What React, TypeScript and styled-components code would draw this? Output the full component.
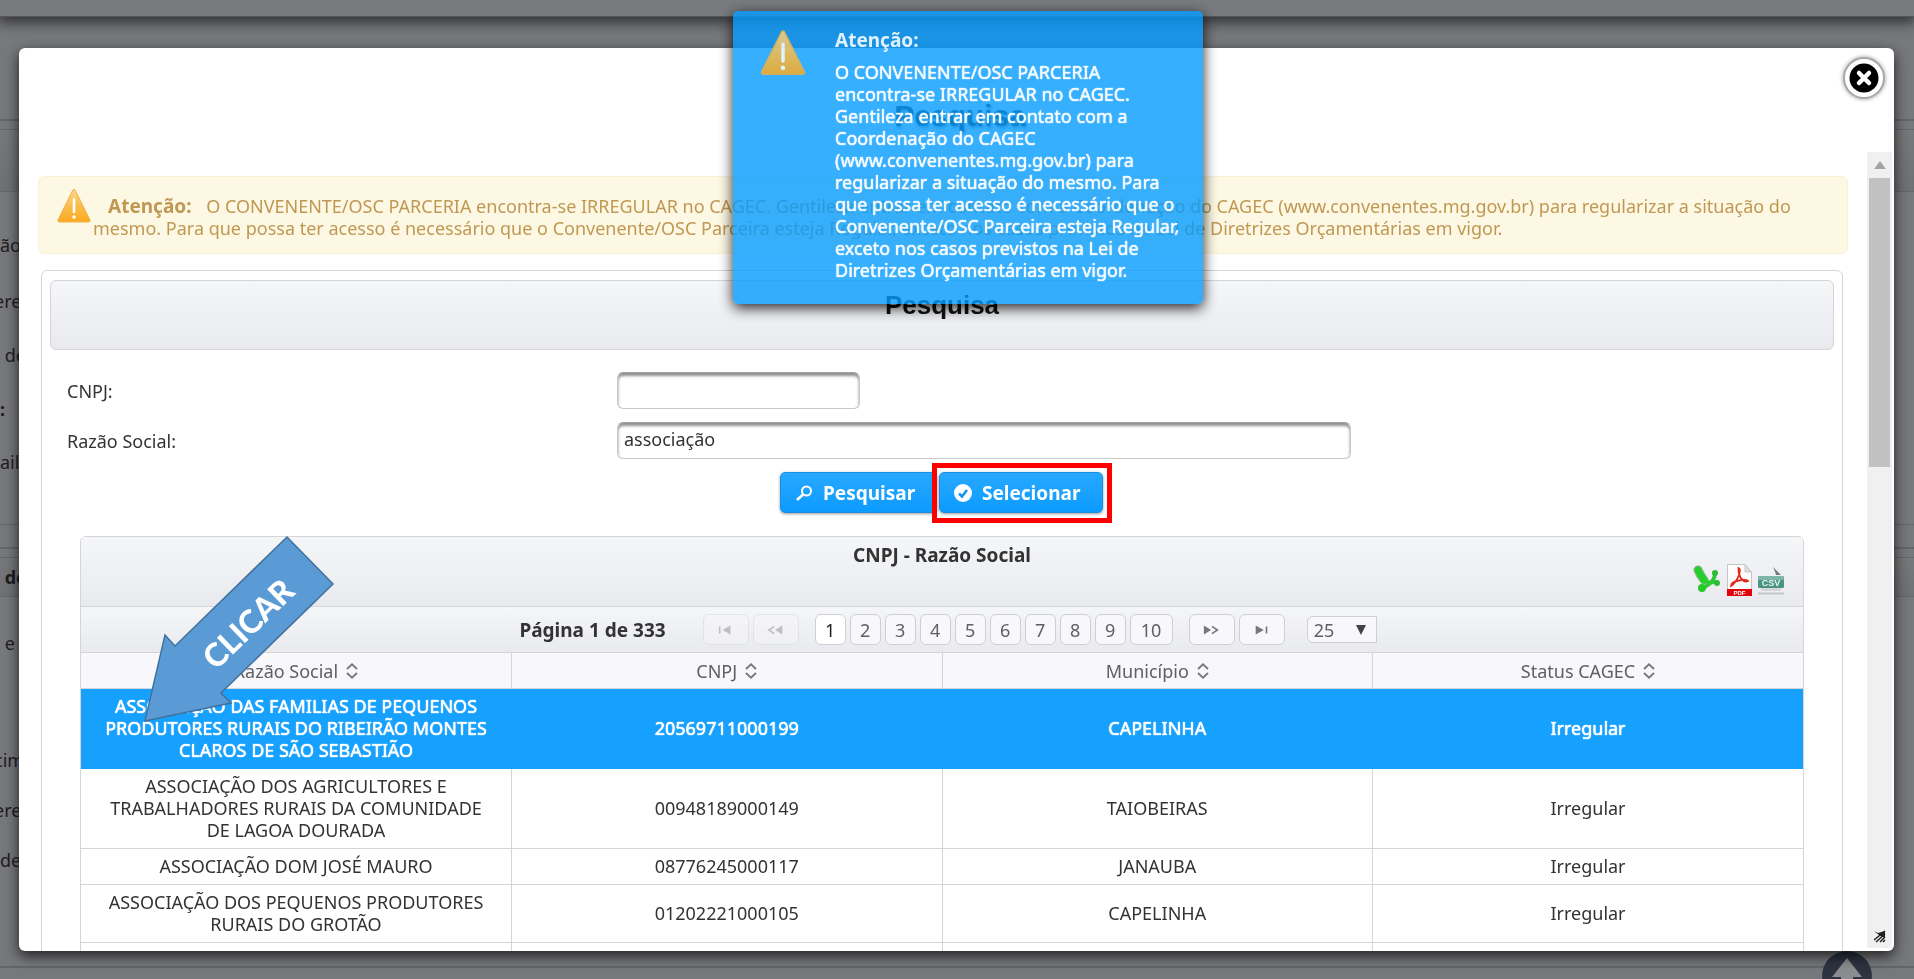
import React from 'react';
import styled, { createGlobalStyle, css } from 'styled-components';

const line = '#d5d5d8';
const blue = '#16a1ff';
const panelGradient = 'linear-gradient(#f5f6f8, #e9eaee)';

const GlobalStyle = createGlobalStyle`
  * { box-sizing: border-box; }
  body {
    margin: 0;
    overflow: hidden;
    background: #77787c;
    color: #333;
    font-family: "Noto Sans", "DejaVu Sans", sans-serif;
    font-size: 18px;
    line-height: 22px;
  }
  button, input, select { font: inherit; }
  h1, h2, p { margin: 0; }
`;

const strong = css`
  text-shadow: 0 0 1px currentColor, 0 0 1px currentColor;
`;
const heading = css`
  font-size: 19px;
  font-weight: bold;
`;

/* dimmed page behind the dialog */
const Page = styled.div`
  height: 100vh;
  overflow: hidden;
  color: #1d1d1f;
`;
const TopBar = styled.header`
  height: 17px;
  background: #797a7e;
  border-bottom: 1px solid #55565a;
  box-shadow: 0 3px 14px 2px #2c2d30;
`;
const Section = styled.section`
  margin-top: ${(p: { $gap: number }) => p.$gap}px;
  border-top: 2px solid #646569;
  padding-top: 8px;
`;
const SectionBar = styled.div`
  height: ${(p: { $h: number }) => p.$h}px;
  border: solid #66676b;
  border-width: 1px 0;
  background: linear-gradient(#77787b, #6e7073);
  font-weight: bold;
  display: flex;
  align-items: center;
`;
const PageLabel = styled.div<{ $h: number; $bold?: boolean; $cut?: boolean }>`
  height: ${(p) => p.$h}px;
  margin-left: ${(p) => (p.$cut ? '-6px' : '0')};
  font-weight: ${(p) => (p.$bold ? 'bold' : 'normal')};
  display: flex;
  align-items: center;
  white-space: pre;
`;
const Divider = styled.div`
  height: 23px;
  margin-top: 37px;
  border-top: 1px solid #646569;
`;
const ToTop = styled.a`
  position: fixed;
  right: 42px;
  bottom: -22px;
  width: 50px;
  height: 50px;
  border-radius: 50%;
  background: #2d3440;
  svg { display: block; }
`;

/* dialog */
const Dialog = styled.div`
  position: fixed;
  inset: 48px 20px 28px 19px;
  display: flex;
  flex-direction: column;
  background: #fff;
  border-radius: 6px;
  box-shadow: 0 5px 14px rgba(0, 0, 0, 0.75);
  overflow: hidden;
`;
const DialogHead = styled.div`
  flex: none;
  height: 104px;
  padding: 50px 0 0 7px;
  text-align: center;
`;
const DialogTitle = styled.h1`
  font: bold 30px/36px "Liberation Sans", sans-serif;
  color: rgba(0, 0, 0, 0.8);
  text-shadow: 1px 2px 3px rgba(0, 0, 0, 0.5);
`;
const CloseButton = styled.button`
  position: absolute;
  top: 9px;
  right: 9px;
  width: 42px;
  height: 42px;
  padding: 0;
  border: 2px solid #a9a9a9;
  border-radius: 50%;
  background: #fff;
  box-shadow: 0 0 4px #999;
  display: grid;
  place-items: center;
`;
const DialogBody = styled.div`
  flex: 1;
  min-height: 0;
  display: flex;
`;
const Content = styled.div`
  flex: 1;
  min-width: 0;
  overflow: hidden;
  padding: 24px 19px 0;
`;
const ScrollTrack = styled.div`
  width: 25px;
  margin: 0 2px 3px 0;
  background: #f0f0f0;
  display: flex;
  flex-direction: column;
  align-items: center;
  justify-content: space-between;
`;
const ScrollUp = styled.div`
  height: 26px;
  display: grid;
  place-items: center;
`;
const ScrollThumb = styled.div`
  width: 21px;
  height: 289px;
  background: #c1c1c1;
  margin-bottom: auto;
`;

const Warning = styled.div`
  display: flex;
  height: 78px;
  padding: 10px 12px 0 18px;
  border: 1px solid #faf0d2;
  border-radius: 6px;
  background: #fcf8e3;
  color: #c09853;
  p { text-indent: 15px; padding-top: 8px; }
  b { ${heading} margin-right: 10px; }
  svg { flex: none; margin-right: 2px; }
`;
const Panel = styled.div`
  margin: 16px 5px 0 3px;
  padding: 9px 8px 0;
  border: 1px solid ${line};
  border-radius: 6px;
`;
const PanelHeader = styled.h2`
  height: 70px;
  padding-top: 8px;
  border: 1px solid ${line};
  border-radius: 6px;
  background: ${panelGradient};
  color: #111;
  text-align: center;
  font: bold 26px/32px "Liberation Sans", sans-serif;
`;
const Form = styled.form`
  padding: 22px 18px 0 17px;
`;
const Field = styled.div`
  display: flex;
  height: 50px;
  label { width: 550px; padding-top: 8px; }
`;
const TextInput = styled.input<{ $w: number }>`
  width: ${(p) => p.$w}px;
  height: 37px;
  padding: 0 6px 3px;
  border: 1px solid #c8c8c8;
  border-top-color: #a0a0a0;
  border-radius: 6px;
  background: #fff;
  box-shadow: inset 0 3px 3px #8f8f8f;
  color: #333;
`;
const Actions = styled.div`
  display: flex;
  justify-content: center;
  gap: 2px;
`;
const Highlight = styled.div`
  position: relative;
  &::after {
    content: "";
    position: absolute;
    inset: -9px -9px -10px -7px;
    border: 5px solid #f00;
    pointer-events: none;
  }
`;
const ActionButton = styled.button<{ $w: number }>`
  width: ${(p) => p.$w}px;
  height: 41px;
  padding: 0 0 0 14px;
  display: flex;
  align-items: center;
  gap: 10px;
  border: 1px solid #1a8fe0;
  border-radius: 5px;
  background: linear-gradient(#28a8ff, #0c9bff);
  box-shadow: 0 1px 3px #999;
  color: #fff;
  ${heading}
`;

const Grid = styled.div`
  margin: 23px 30px 0;
  border: 1px solid ${line};
  border-radius: 6px 6px 0 0;
  overflow: hidden;
`;
const GridHeader = styled.div`
  display: grid;
  height: 70px;
  padding: 7px 19px 10px;
  border-bottom: 1px solid ${line};
  background: ${panelGradient};
  text-align: center;
`;
const GridTitle = styled.div`
  grid-area: 1 / 1;
  color: #333;
  ${heading}
`;
const Exports = styled.div`
  grid-area: 1 / 1;
  justify-self: end;
  align-self: end;
  display: flex;
  align-items: center;
  gap: 6px;
  a { display: block; height: 32px; }
  svg { display: block; }
`;
const Paginator = styled.div`
  display: flex;
  justify-content: center;
  align-items: center;
  height: 45px;
  padding-left: 12px;
  background: ${panelGradient};
`;
const PageInfo = styled.span`
  margin-right: 37px;
  color: #333;
  ${heading}
`;
const PageGroup = styled.div`
  display: flex;
  gap: 4px;
  margin-right: 16px;
`;
const PageButton = styled.button<{ $active?: boolean; $w?: number }>`
  width: ${(p) => p.$w ?? 32}px;
  height: 31px;
  padding: 0;
  display: grid;
  place-items: center;
  border: 1px solid #cfcfd3;
  border-radius: 6px;
  background: ${(p) => (p.$active ? '#fff' : '#f8f7fc')};
  color: ${(p) => (p.$active ? '#222' : '#5f6063')};
  &:disabled { opacity: 0.4; }
`;
const PageSize = styled.div`
  position: relative;
  margin-left: 6px;
  select {
    appearance: none;
    display: block;
    width: 70px;
    height: 27px;
    padding: 0 6px;
    border: 1px solid #cfcfd3;
    border-radius: 6px 0 0 6px;
    background: #f8f7fc;
    color: #5f6063;
    line-height: 24px;
  }
  svg { position: absolute; right: 11px; top: 9px; pointer-events: none; }
`;
const Table = styled.table`
  width: 100%;
  table-layout: fixed;
  border-collapse: collapse;
  text-align: center;
  th {
    height: 36px;
    padding: 0;
    border: 1px solid ${line};
    background: #f8f7fc;
    color: #5f6063;
    font-weight: normal;
  }
  td { padding: 6px 20px 7px; border: 1px solid ${line}; }
  th:first-child, td:first-child { border-left: 0; }
  th:last-child, td:last-child { border-right: 0; }
`;
const Row = styled.tr<{ $selected?: boolean }>`
  ${(p) => p.$selected && css`
    background: ${blue};
    color: #fff;
    ${strong}
    td { border-color: ${blue}; }
  `}
`;
const SortLabel = styled.span`
  display: inline-flex;
  align-items: center;
  gap: 8px;
`;

const Toast = styled.div`
  position: fixed;
  top: 11px;
  left: calc(50% - 224px);
  width: 470px;
  height: 293px;
  padding: 18px 20px 0 27px;
  display: flex;
  gap: 29px;
  border-radius: 5px;
  background: rgba(4, 155, 255, 0.8);
  box-shadow: 0 4px 14px rgba(0, 0, 0, 0.85);
  color: #f2faff;
  ${strong}
  svg { flex: none; opacity: 0.85; }
`;
const ToastTitle = styled.div`
  margin-bottom: 10px;
  color: #dff1ff;
  text-shadow: none;
  ${heading}
`;
const Arrow = styled.svg`
  position: fixed;
  left: 140px;
  top: 530px;
  pointer-events: none;
`;

const WarningIcon = ({ w, h }: { w: number; h: number }) => (
  <svg width={w} height={h} viewBox="0 0 34 36" aria-hidden="true">
    <defs>
      <linearGradient id="amber" x1="0" y1="0" x2="0" y2="1">
        <stop offset="0" stopColor="#fbd88a" />
        <stop offset="0.5" stopColor="#f9bd4c" />
        <stop offset="1" stopColor="#fbab1f" />
      </linearGradient>
    </defs>
    <path d="M17 1.5 Q18 1.5 18.6 3 L33 32 Q33.6 34 31.6 34 H2.4 Q.4 34 1 32 L15.4 3 Q16 1.5 17 1.5Z" fill="url(#amber)" stroke="#eeb04a" />
    <path d="M17 11.500 V24" stroke="#fff" strokeWidth="2.600" strokeLinecap="round" />
    <circle cx="17" cy="29" r="1.700" fill="#fff" />
  </svg>
);
const SortIcon = () => (
  <svg width="12" height="16" viewBox="0 0 12 16" fill="none" stroke="#77787b" strokeWidth="1.800" aria-hidden="true">
    <path d="M1 6 L6 1.300 L11 6 M1 10 L6 14.700 L11 10" />
  </svg>
);
const NavIcon = ({ d, f }: { d: string; f: string }) => (
  <svg width="18" height="10" viewBox="0 0 20 10" aria-hidden="true">
    <path d={d} fill="none" stroke="#77787b" strokeWidth="1.800" />
    <path d={f} fill="#77787b" />
  </svg>
);

const rows = [
  ['ASSOCIAÇÃO DAS FAMILIAS DE PEQUENOS PRODUTORES RURAIS DO RIBEIRÃO MONTES CLAROS DE SÃO SEBASTIÃO', '20569711000199', 'CAPELINHA'],
  ['ASSOCIAÇÃO DOS AGRICULTORES E TRABALHADORES RURAIS DA COMUNIDADE DE LAGOA DOURADA', '00948189000149', 'TAIOBEIRAS'],
  ['ASSOCIAÇÃO DOM JOSÉ MAURO', '08776245000117', 'JANAUBA'],
  ['ASSOCIAÇÃO DOS PEQUENOS PRODUTORES RURAIS DO GROTÃO', '01202221000105', 'CAPELINHA'],
];
const message =
  'O CONVENENTE/OSC PARCERIA encontra-se IRREGULAR no CAGEC. Gentileza entrar em contato com a Coordenação do CAGEC (www.convenentes.mg.gov.br) para regularizar a situação do mesmo. Para que possa ter acesso é necessário que o Convenente/OSC Parceira esteja Regular, exceto nos casos previstos na Lei de Diretrizes Orçamentárias em vigor.';

export default function App() {
  return (
    <>
      <GlobalStyle />
      <Page>
        <TopBar />
        <Section $gap={102}>
          <SectionBar $h={63} />
          <PageLabel $h={25} />
          <PageLabel $h={56}>ão</PageLabel>
          <PageLabel $h={56} $cut>ere</PageLabel>
          <PageLabel $h={52}> de</PageLabel>
          <PageLabel $h={56} $bold>:</PageLabel>
          <PageLabel $h={50}>ail</PageLabel>
        </Section>
        <Divider />
        <Section $gap={0}>
          <SectionBar $h={40}>&nbsp;de</SectionBar>
          <PageLabel $h={92}> e (</PageLabel>
          <PageLabel $h={46} />
          <PageLabel $h={50} $cut>cim</PageLabel>
          <PageLabel $h={50} $cut>ere</PageLabel>
          <PageLabel $h={50}>de</PageLabel>
        </Section>
        <Section $gap={81} />
        <ToTop href="#" aria-label="Topo">
          <svg width="50" height="50" viewBox="0 0 50 50"><path d="M25 7 L40 26 H31 V40 H19 V26 H10Z" fill="#8b8c90" /></svg>
        </ToTop>
      </Page>

      <Dialog role="dialog" aria-label="Pesquisa">
        <DialogHead>
          <DialogTitle>Pesquisa</DialogTitle>
          <CloseButton aria-label="Fechar">
            <svg width="30" height="30" viewBox="0 0 30 30">
              <circle cx="15" cy="15" r="14.500" fill="#000" />
              <path d="M10 10 L20 20 M20 10 L10 20" stroke="#fff" strokeWidth="4.500" strokeLinecap="round" />
            </svg>
          </CloseButton>
        </DialogHead>
        <DialogBody>
          <Content>
            <Warning>
              <WarningIcon w={34} h={38} />
              <p><b>Atenção:</b> {message}</p>
            </Warning>
            <Panel>
              <PanelHeader>Pesquisa</PanelHeader>
              <Form onSubmit={(e) => e.preventDefault()}>
                <Field>
                  <label htmlFor="cnpj">CNPJ:</label>
                  <TextInput id="cnpj" $w={243} />
                </Field>
                <Field>
                  <label htmlFor="razao">Razão Social:</label>
                  <TextInput id="razao" $w={734} defaultValue="associação" />
                </Field>
                <Actions>
                  <ActionButton $w={157}>
                    <svg width="18" height="18" viewBox="0 0 18 18" fill="none" stroke="#fff" strokeWidth="2">
                      <circle cx="11.500" cy="7" r="4.500" /><path d="M8 10.500 L2 16" strokeWidth="2.600" />
                    </svg>
                    Pesquisar
                  </ActionButton>
                  <Highlight>
                    <ActionButton $w={164}>
                      <svg width="18" height="20" viewBox="0 0 18 20">
                        <circle cx="9" cy="10" r="9" fill="#fff" />
                        <path d="M5 10.500 L8 13.500 L13 7" fill="none" stroke="#1297f3" strokeWidth="2.600" />
                      </svg>
                      Selecionar
                    </ActionButton>
                  </Highlight>
                </Actions>
              </Form>
              <Grid>
                <GridHeader>
                  <GridTitle>CNPJ - Razão Social</GridTitle>
                  <Exports>
                    <a href="#" aria-label="Exportar XLS">
                      <svg width="28" height="32" viewBox="0 0 28 32">
                        <g stroke="#8fb58f" fill="none" strokeLinecap="round"><path d="M5 6 Q7 11 11 16" strokeWidth="9" /><path d="M10 17 Q15 19 23 18 M22 9 Q22 19 9 24" strokeWidth="4" /></g>
                        <g stroke="#25cf2b" fill="none" strokeLinecap="round"><path d="M5 6 Q7 11 11 16" strokeWidth="7" /><path d="M10 17 Q15 19 23 18 M22 9 Q22 19 9 24" strokeWidth="3" /></g>
                        <circle cx="22" cy="9" r="3" fill="#2bbd34" /><circle cx="24" cy="19" r="3" fill="#2bbd34" /><circle cx="9" cy="24" r="4" fill="#25c92d" />
                      </svg>
                    </a>
                    <a href="#" aria-label="Exportar PDF">
                      <svg width="25" height="32" viewBox="0 0 25 32">
                        <path d="M.5 .5 H18 L24.500 8 V31.500 H.5Z" fill="#fdfdfd" stroke="#c5c5c5" />
                        <path d="M18 .5 V8 H24.500Z" fill="#ddd" stroke="#c5c5c5" />
                        <path d="M11.500 4 Q14 5 12 11 Q9 19 4 22 Q4 18 12 16.500 Q19 15 21 17 Q17 19 13.500 13.500 Q11 9 11.500 4Z" fill="none" stroke="#e5281b" strokeWidth="1.800" />
                        <path d="M0 25 H25 V32 H0Z" fill="#e3000b" />
                        <text x="12.500" y="31" fontSize="6" fontWeight="bold" textAnchor="middle" fill="#fff" fontFamily="Liberation Sans">PDF</text>
                      </svg>
                    </a>
                    <a href="#" aria-label="Exportar CSV">
                      <svg width="26" height="32" viewBox="0 0 26 32">
                        <path d="M3 3 H17 L23 9 V28 H3Z" fill="#eff0f1" />
                        <path d="M15 3 L23 11 H18 Q17 7 15 3Z" fill="#777" />
                        <path d="M0 29.500 H26" stroke="#c4c6c8" strokeWidth="2" />
                        <path d="M3 25.500 H23" stroke="#d3d5d6" strokeWidth="3" />
                        <rect y="12" width="26" height="12" rx="1.500" fill="#4b9482" />
                        <rect y="12" width="26" height="4" rx="1.500" fill="#7fb5a8" />
                        <text x="13" y="21.500" fontSize="9" fontWeight="bold" textAnchor="middle" fill="#e4f3ef" fontFamily="Liberation Sans">CSV</text>
                      </svg>
                    </a>
                  </Exports>
                </GridHeader>
                <Paginator>
                  <PageInfo>Página 1 de 333</PageInfo>
                  <PageGroup>
                    <PageButton $w={46} disabled aria-label="Primeira"><NavIcon d="M3 1 V9" f="M15 0 V10 L6 5Z" /></PageButton>
                    <PageButton $w={46} disabled aria-label="Anterior"><NavIcon d="M8 1 L2 5 L8 9" f="M17 0 V10 L9 5Z" /></PageButton>
                  </PageGroup>
                  <PageGroup>
                    {[1, 2, 3, 4, 5, 6, 7, 8, 9].map((n) => (
                      <PageButton key={n} $w={31} $active={n === 1}>{n}</PageButton>
                    ))}
                    <PageButton $w={43}>10</PageButton>
                  </PageGroup>
                  <PageGroup>
                    <PageButton $w={46} aria-label="Próxima"><NavIcon d="M10 1 L16 5 L10 9" f="M1 0 V10 L9 5Z" /></PageButton>
                    <PageButton $w={46} aria-label="Última"><NavIcon d="M15 1 V9" f="M3 0 V10 L12 5Z" /></PageButton>
                  </PageGroup>
                  <PageSize>
                    <select aria-label="Linhas por página" defaultValue="25"><option>25</option></select>
                    <svg width="10" height="10" viewBox="0 0 10 10"><path d="M0 0 H10 L5 10Z" fill="#444" /></svg>
                  </PageSize>
                </Paginator>
                <Table>
                  <thead>
                    <tr>
                      {['Razão Social', 'CNPJ', 'Município', 'Status CAGEC'].map((h) => (
                        <th key={h}><SortLabel>{h}<SortIcon /></SortLabel></th>
                      ))}
                    </tr>
                  </thead>
                  <tbody>
                    {rows.map((r, i) => (
                      <Row key={r[1]} $selected={i === 0}>
                        <td>{r[0]}</td><td>{r[1]}</td><td>{r[2]}</td><td>Irregular</td>
                      </Row>
                    ))}
                    <Row><td>&nbsp;</td><td /><td /><td /></Row>
                  </tbody>
                </Table>
              </Grid>
            </Panel>
          </Content>
          <ScrollTrack>
            <ScrollUp><svg width="12" height="8" viewBox="0 0 12 8"><path d="M6 0 L12 8 H0Z" fill="#a3a3a3" /></svg></ScrollUp>
            <ScrollThumb />
            <svg width="14" height="18" viewBox="0 0 14 18">
              <path d="M1 1 L5 3 L12 1 V7 L9 7 L6 5 Z" fill="#222" />
              <path d="M12 1 L1 10 M12 4 L3 12 M12 7 L7 12 M12 10 L10 12" fill="none" stroke="#222" strokeWidth="1.500" />
            </svg>
          </ScrollTrack>
        </DialogBody>
      </Dialog>

      <Arrow width="200" height="200" viewBox="140 530 200 200">
        <path d="M287 537 L333 584 L221 693 L231 703 L145 721 L165 635 L175 646Z" fill="#5b9bd5" stroke="#41719c" strokeWidth="1.500" />
        <text transform="translate(216 671) rotate(-44)" fontFamily="Lato" fontWeight="900" fontSize="32" fill="#fff">CLICAR</text>
      </Arrow>

      <Toast role="alert">
        <WarningIcon w={46} h={48} />
        <div>
          <ToastTitle>Atenção:</ToastTitle>
          <p>{message}</p>
        </div>
      </Toast>
    </>
  );
}
